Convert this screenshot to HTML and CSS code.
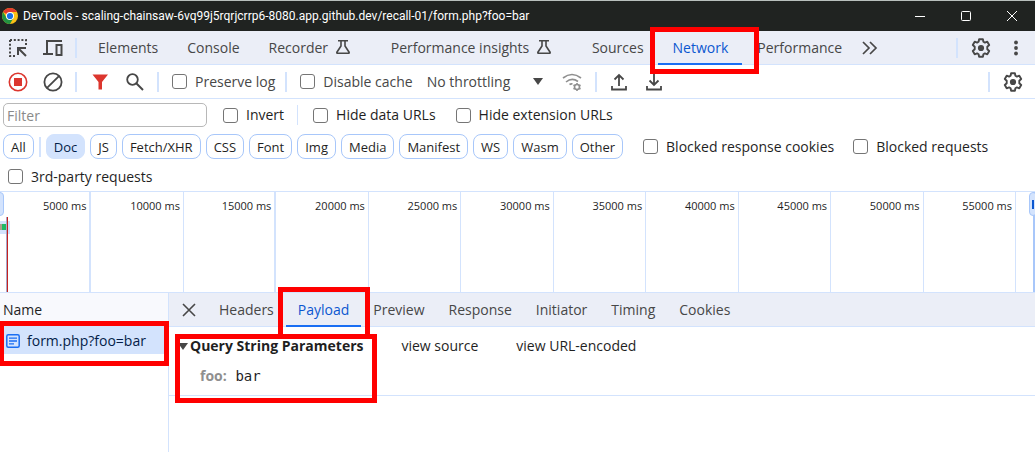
FILE: index.html
```html
<!DOCTYPE html>
<html lang="en">
<head>
<meta charset="utf-8">
<title>DevTools</title>
<link rel="stylesheet" href="styles.css">
</head>
<body>
<svg class="defs" aria-hidden="true">
  <symbol id="gear" viewBox="0 0 20 20"><path d="M8.1 1.2h3.8l.5 2.5 1.5.9 2.4-.9 1.9 3.3-1.900 1.700v2.600l1.900 1.700-1.900 3.300-2.400-.9-1.500.9-.5 2.500H8.100l-.5-2.500-1.500-.9-2.400.9L1.800 13l1.900-1.700V8.700L1.800 7l1.900-3.300 2.400.9 1.500-.9z" fill="none" stroke="currentColor" stroke-width="1.9" stroke-linejoin="round"/><circle cx="10" cy="10" r="3.1" fill="currentColor"/></symbol>
  <symbol id="flask" viewBox="0 0 16 16"><path d="M3 1.7h10M6 2v5L1.9 13.2q-.4 1.1.8 1.1h10.6q1.2 0 .8-1.1L10 7V2" fill="none" stroke="currentColor" stroke-width="1.6"/></symbol>
</svg>
<header class="titlebar">
  <svg class="logo" viewBox="0 0 16 16"><circle cx="8" cy="8" r="8" fill="#fbc116"/><path d="M8 8 1.1 4A8 8 0 0 1 14.9 4H8z" fill="#e33b2e"/><path d="M1.1 4A8 8 0 0 0 8 16l3.4-6H4.6z" fill="#229342"/><circle cx="8" cy="8" r="4" fill="#fff"/><circle cx="8" cy="8" r="3.1" fill="#1a73e8"/></svg>
  <h1 class="title">DevTools - scaling-chainsaw-6vq99j5rqrjcrrp6-8080.app.github.dev/recall-01/form.php?foo=bar</h1>
  <div class="window-buttons">
    <button aria-label="Minimize"><svg viewBox="0 0 10 10"><path d="M0 5.5h10"/></svg></button>
    <button aria-label="Maximize"><svg viewBox="0 0 10 10"><rect x=".5" y=".5" width="9" height="9" rx="1"/></svg></button>
    <button aria-label="Close"><svg viewBox="0 0 10 10"><path d="m0 0 10 10M10 0 0 10"/></svg></button>
  </div>
</header>
<nav class="bar main-tabs">
  <button class="icon" aria-label="Inspect"><svg viewBox="0 0 20 20"><path d="M2 2h16v5M2 2v16h6" fill="none" stroke="currentColor" stroke-width="2" stroke-dasharray="2 1.8"/><path d="M10 17V10h8M10.5 10.5l7.5 7.5" fill="none" stroke="currentColor" stroke-width="2"/></svg></button>
  <button class="icon" aria-label="Device toolbar"><svg viewBox="0 0 20 20"><path d="M19 3H4v12M0 16h10M13.5 7h5v10h-5z" fill="none" stroke="currentColor" stroke-width="2"/></svg></button>
  <span class="divider"></span>
  <div class="tabs">
    <button class="tab">Elements</button>
    <button class="tab">Console</button>
    <button class="tab tab-lab">Recorder <svg><use href="#flask"/></svg></button>
    <button class="tab tab-lab">Performance insights <svg><use href="#flask"/></svg></button>
    <button class="tab">Sources</button>
    <button class="tab selected marked">Network</button>
    <button class="tab">Performance</button>
    <button class="icon more" aria-label="More tabs"><svg viewBox="0 0 20 20"><path d="m3 4 6 6-6 6M10 4l6 6-6 6" fill="none" stroke="currentColor" stroke-width="1.7"/></svg></button>
  </div>
  <div class="bar-end">
    <span class="divider"></span>
    <button class="icon" aria-label="Settings"><svg><use href="#gear"/></svg></button>
    <button class="icon" aria-label="Menu"><svg viewBox="0 0 20 20"><g fill="currentColor"><circle cx="10" cy="4.5" r="1.9"/><circle cx="10" cy="10" r="1.9"/><circle cx="10" cy="15.5" r="1.9"/></g></svg></button>
  </div>
</nav>
<div class="bar toolbar">
  <button class="icon red" aria-label="Stop recording"><svg viewBox="0 0 20 20"><circle cx="10" cy="10" r="8.7" fill="none" stroke="currentColor" stroke-width="1.6"/><path d="M6 6h8v8H6z" fill="currentColor"/></svg></button>
  <button class="icon" aria-label="Clear"><svg viewBox="0 0 20 20"><path d="M3.8 16.2 16.2 3.8" stroke="currentColor" stroke-width="1.8"/><circle cx="10" cy="10" r="8.6" fill="none" stroke="currentColor" stroke-width="1.8"/></svg></button>
  <span class="divider"></span>
  <button class="icon red" aria-label="Filter"><svg viewBox="0 0 20 20"><path d="M2.500 2.500H18l-6 7.500v7.500H8.500V10z" fill="currentColor"/></svg></button>
  <button class="icon" aria-label="Search"><svg viewBox="0 0 20 20"><circle cx="7.500" cy="7.500" r="5.300" fill="none" stroke="currentColor" stroke-width="1.800"/><path d="m11.500 11.500 6.500 6.500" stroke="currentColor" stroke-width="2"/></svg></button>
  <span class="divider"></span>
  <label class="check"><input type="checkbox">Preserve log</label>
  <span class="divider"></span>
  <label class="check"><input type="checkbox">Disable cache</label>
  <div class="throttle"><select aria-label="Throttling"><option>No throttling</option></select><svg viewBox="0 0 10 7"><path d="M0 0h10L5 7z" fill="currentColor"/></svg></div>
  <button class="icon dim" aria-label="Network conditions"><svg viewBox="0 0 20 20"><g fill="none" stroke="currentColor" stroke-width="1.600"><path d="M1 6q9-7 18 0M4 10q6-5 12-.5M7.500 12.500q1.500-1 3-.5"/><circle cx="15" cy="15" r="2.500"/><path d="M15 11v1.500M15 17.500V19M11.500 13l1.300.8M17.200 16.300l1.300.7M18.500 13l-1.300.8M12.800 16.300l-1.300.7"/></g></svg></button>
  <span class="divider"></span>
  <button class="icon" aria-label="Import"><svg viewBox="0 0 20 20"><path d="M10 14V3M5.500 7.500 10 3l4.500 4.500M3 14v3.500h14V14" fill="none" stroke="currentColor" stroke-width="1.800"/></svg></button>
  <button class="icon" aria-label="Export"><svg viewBox="0 0 20 20"><path d="M10 2v11M5.500 8.500 10 13l4.500-4.500M3 14v3.500h14V14" fill="none" stroke="currentColor" stroke-width="1.800"/></svg></button>
  <div class="bar-end">
    <span class="divider"></span>
    <button class="icon" aria-label="Network settings"><svg><use href="#gear"/></svg></button>
  </div>
</div>
<section class="filters">
  <div class="filter-row">
    <input class="filter" type="text" placeholder="Filter" aria-label="Filter">
    <label class="check"><input type="checkbox">Invert</label>
    <span class="divider thin"></span>
    <label class="check"><input type="checkbox">Hide data URLs</label>
    <label class="check"><input type="checkbox">Hide extension URLs</label>
  </div>
  <div class="chip-row">
    <button class="chip">All</button>
    <span class="divider"></span>
    <button class="chip chosen">Doc</button>
    <button class="chip">JS</button>
    <button class="chip">Fetch/XHR</button>
    <button class="chip">CSS</button>
    <button class="chip">Font</button>
    <button class="chip">Img</button>
    <button class="chip">Media</button>
    <button class="chip">Manifest</button>
    <button class="chip">WS</button>
    <button class="chip">Wasm</button>
    <button class="chip">Other</button>
    <label class="check"><input type="checkbox">Blocked response cookies</label>
    <label class="check"><input type="checkbox">Blocked requests</label>
  </div>
  <div class="third-row"><label class="check"><input type="checkbox">3rd-party requests</label></div>
</section>
<section class="timeline">
  <div class="ticks">
    <span>5000 ms</span><span>10000 ms</span><span>15000 ms</span><span>20000 ms</span><span>25000 ms</span><span>30000 ms</span><span>35000 ms</span><span>40000 ms</span><span>45000 ms</span><span>50000 ms</span><span>55000 ms</span>
  </div>
  <i class="handle handle-left"></i>
  <i class="request"></i>
  <i class="load-line"></i>
  <i class="handle-track"></i>
  <i class="handle handle-right"></i>
</section>
<main class="panes">
  <aside class="requests">
    <div class="name-head">Name</div>
    <a class="request-row" href="#payload"><svg viewBox="0 0 14 14"><rect x=".8" y=".8" width="12.400" height="12.400" rx="1.500" fill="none" stroke="currentColor" stroke-width="1.500"/><path d="M3 4.200h8M3 7h8M3 9.800h5" stroke="currentColor" stroke-width="1.300"/></svg>form.php?foo=bar</a>
  </aside>
  <section class="details" id="payload">
    <nav class="bar detail-tabs">
      <button class="icon close" aria-label="Close"><svg viewBox="0 0 20 20"><path d="m4 4 12 12M16 4 4 16" stroke="currentColor" stroke-width="1.600"/></svg></button>
      <button class="tab">Headers</button>
      <button class="tab selected marked">Payload</button>
      <button class="tab">Preview</button>
      <button class="tab">Response</button>
      <button class="tab">Initiator</button>
      <button class="tab">Timing</button>
      <button class="tab">Cookies</button>
    </nav>
    <div class="payload">
      <div class="payload-head">
        <h2><svg viewBox="0 0 10 7"><path d="M0 0h10L5 7z" fill="currentColor"/></svg>Query String Parameters</h2>
        <button>view source</button>
        <button>view URL-encoded</button>
      </div>
      <div class="param"><b>foo:</b> <code>bar</code></div>
    </div>
  </section>
</main>
</body>
</html>
```
FILE: styles.css
```css
*, *::before, *::after { box-sizing: border-box; }
body {
  margin: 0;
  background: #fff;
  color: #1f1f1f;
  font: 14px/20px "Open Sans", "Noto Sans", sans-serif;
}
button, input, select { font: inherit; color: inherit; }
button { padding: 0; border: 0; background: none; white-space: nowrap; }
.defs { position: absolute; width: 0; height: 0; }

.titlebar {
  display: flex;
  align-items: center;
  height: 31px;
  padding-left: 2px;
  border-top: 1px solid #b9c0bd;
  background: #202321;
  color: #fff;
}
.logo { width: 16px; height: 16px; }
.title { flex: 1; margin: 0 0 0 5px; font: 400 12px/20px Roboto, "Open Sans", sans-serif; white-space: nowrap; }
.window-buttons { display: flex; }
.window-buttons button { width: 46px; height: 30px; }
.window-buttons svg { width: 10px; height: 10px; fill: none; stroke: #fff; overflow: visible; }

.bar { display: flex; align-items: center; height: 34px; border-bottom: 1px solid #d3e3fd; color: #474747; }
.main-tabs, .detail-tabs { background: #ebeef7; }
.icon { flex: none; width: 35px; height: 24px; }
.icon svg { display: block; width: 20px; height: 20px; margin: auto; }
.red { color: #dc362e; }
.dim { color: #8f8f8f; }
.divider { flex: none; width: 2px; height: 20px; margin: 0 5px; background: #d3e3fd; }
.bar-end { display: flex; align-items: center; margin-left: auto; padding-right: 2px; }
.toolbar .bar-end { padding-right: 5px; }
.tabs { display: flex; height: 100%; align-items: center; margin-left: 1px; }
.tab { position: relative; height: 33px; padding: 0 12px; }
.tabs .tab { padding: 0 14px 0 15px; }
.tab svg { width: 16px; height: 16px; margin: 0 11px 0 3px; vertical-align: -2px; }
.more { width: 28px; }
.selected { color: #0b57d0; }
.selected::after { content: ""; position: absolute; left: 0; right: 0; bottom: -1px; height: 2px; background: #1a6ef3; }
.marked::before, .request-row::before, .payload::before {
  content: "";
  position: absolute;
  z-index: 3;
  border: 5px solid #f00;
  pointer-events: none;
}
.marked::before { inset: -6px -9px -13px -8px; }
.tabs .marked::before { inset: -4px -17px -10px -8px; }

.check { display: flex; align-items: center; gap: 8px; white-space: nowrap; }
.check input { appearance: none; flex: none; width: 15px; height: 15px; margin: 0; border: 1px solid #757575; border-radius: 3px; background: #fff; }
.toolbar .check { margin-left: 8px; }
.toolbar .check + .divider { margin-left: 10px; }
.throttle { display: flex; align-items: center; margin: 0 12px 0 14px; }
.throttle select { width: 106px; padding: 0; border: 0; appearance: none; background: none; }
.throttle svg { width: 10px; height: 7px; }

.filters { border-bottom: 1px solid #d3e3fd; }
.filter-row, .chip-row, .third-row { display: flex; align-items: center; height: 31px; padding-left: 3px; }
.filter-row { height: 32px; }
.third-row { height: 29px; padding: 0 0 0 8px; }
.filter { width: 204px; height: 24px; margin-right: 16px; padding: 0 3px; border: 1px solid #b8b8b8; border-radius: 5px; outline: 0; }
.filter::placeholder { color: #8a8a8a; }
.thin { width: 1px; margin: 0 15px 0 13px; }
.filter-row .check + .check { margin-left: 20px; }
.chip-row { gap: 5px; }
.chip-row .divider { margin: 0; }
.chip { height: 25px; padding: 0 7px; border: 1px solid #a8c7fa; border-radius: 8px; font-size: 13px; font-weight: 500; }
.chosen { border-color: #d3e3fd; background: #d3e3fd; color: #041e49; }
.chip-row .check { margin-left: 15px; }
.chip-row .check + .check { margin-left: 14px; }

.timeline { position: relative; height: 101px; border-bottom: 1px solid #d3e3fd; overflow: hidden; }
.ticks { display: grid; grid-template-columns: repeat(11, 1fr); height: 100%; margin: 0 19px 0 -1px; }
.ticks span { padding: 4px 3px 0 0; border-right: 1px solid #d3e3fd; font-size: 11px; text-align: right; white-space: nowrap; }
.ticks span:nth-child(-n+3):nth-child(odd) { border-right-width: 2px; }
.handle { position: absolute; top: 0; width: 8px; height: 24px; border: 1px solid #a8c7fa; border-radius: 4px; background: #d3e3fd; }
.handle-left { left: -4px; }
.handle-right { right: -2px; }
.handle-right::after { content: ""; position: absolute; top: 7px; left: 2px; width: 2px; height: 9px; background: #0b57d0; }
.handle-track { position: absolute; right: 0; top: 0; width: 2px; height: 100%; background: #a8c7fa; }
.request { position: absolute; left: 0; top: 29px; width: 10px; height: 13px; border: solid #d3e3fd; border-width: 3px 3px 4px 0; background: linear-gradient(90deg, #a9a18d 2px, #1fb866 2px); }
.load-line { position: absolute; left: 6px; top: 25px; width: 2px; bottom: 0; border-left: 1px solid #a7a7c9; border-right: 1px solid #c5221f; }

.panes { display: grid; grid-template-columns: 169px 1fr; min-height: 159px; }
.requests { border-right: 1px solid #d3e3fd; }
.name-head { height: 33px; padding: 7px 3px; background: #f8f9fd; }
.request-row { position: relative; display: flex; align-items: center; gap: 7px; height: 28px; padding: 2px 6px 0; background: #d3e3fd; color: #041e49; text-decoration: none; }
.request-row::before { inset: -5px -1px -12px -1px; }
.request-row svg { width: 14px; height: 14px; color: #1a6ef3; }
.details { min-width: 0; }
.detail-tabs .close { width: 36px; margin-left: 2px; }
.payload { position: relative; height: 69px; border-bottom: 1px solid #d3e3fd; }
.payload::before { left: 6px; top: 7px; width: 202px; height: 69px; }
.payload-head { display: flex; align-items: center; gap: 38px; padding: 9px 0 0 9px; }
.payload-head h2 { display: flex; align-items: center; gap: 2px; margin: 0; font-size: 14px; line-height: 20px; white-space: nowrap; }
.payload-head svg { width: 10px; height: 7px; color: #474747; }
.param { padding: 10px 0 0 31px; }
.param b { color: #8f8f8f; }
.param code { margin-left: 5px; font: 14px "DejaVu Sans Mono", monospace; }
```
